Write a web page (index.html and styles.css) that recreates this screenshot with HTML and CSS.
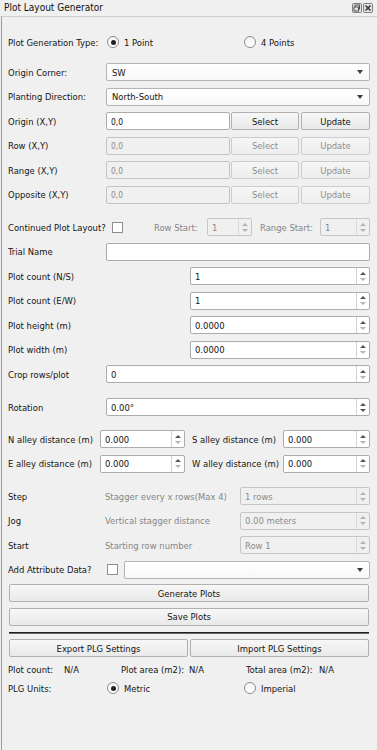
FILE: index.html
```html
<!DOCTYPE html>
<html>
<head>
<meta charset="utf-8">
<link rel="stylesheet" href="styles.css">
</head>
<body>
<div class="titlebar">
  <span class="title">Plot Layout Generator</span>
  <span class="tb-icons">
    <svg class="tb-ic" width="10" height="10" viewBox="0 0 10 10"><rect x="0.5" y="0.5" width="9" height="9" rx="1" fill="#e4e4e4" stroke="#7d7d7d"/><rect x="3" y="2" width="4.5" height="4" fill="none" stroke="#555" stroke-width="1"/><rect x="2" y="4" width="4.5" height="4" fill="#e4e4e4" stroke="#555" stroke-width="1"/></svg>
    <svg class="tb-ic" width="10" height="10" viewBox="0 0 10 10"><rect x="0.5" y="0.5" width="9" height="9" rx="1" fill="#e4e4e4" stroke="#7d7d7d"/><path d="M2.5 2.5 L7.5 7.5 M7.5 2.5 L2.5 7.5" stroke="#333" stroke-width="1.5"/></svg>
  </span>
</div>
<div class="content">
  <div class="row radio-row">
    <span class="lbl w98">Plot Generation Type:</span>
    <span class="radio-item w137"><span class="radio on"></span>1 Point</span>
    <span class="radio-item"><span class="radio"></span>4 Points</span>
  </div>

  <div class="group g-a">
    <div class="row">
      <span class="lbl w98">Origin Corner:</span>
      <span class="combo"><span class="cv">SW</span><i class="ca"></i></span>
    </div>
    <div class="row">
      <span class="lbl w98">Planting Direction:</span>
      <span class="combo"><span class="cv">North-South</span><i class="ca"></i></span>
    </div>
    <div class="row">
      <span class="lbl w98">Origin (X,Y)</span>
      <span class="input xy">0,0</span>
      <span class="btn sel">Select</span>
      <span class="btn upd">Update</span>
    </div>
    <div class="row">
      <span class="lbl w98">Row (X,Y)</span>
      <span class="input xy dis">0,0</span>
      <span class="btn sel dis">Select</span>
      <span class="btn upd dis">Update</span>
    </div>
    <div class="row">
      <span class="lbl w98">Range (X,Y)</span>
      <span class="input xy dis">0,0</span>
      <span class="btn sel dis">Select</span>
      <span class="btn upd dis">Update</span>
    </div>
    <div class="row">
      <span class="lbl w98">Opposite (X,Y)</span>
      <span class="input xy dis">0,0</span>
      <span class="btn sel dis">Select</span>
      <span class="btn upd dis">Update</span>
    </div>
  </div>

  <div class="group g-b">
    <div class="row">
      <span class="lbl w104">Continued Plot Layout?</span>
      <span class="check"></span>
      <span class="lbl gray rs">Row Start:</span>
      <span class="spin dis w45"><span class="sv">1</span><span class="sa"><i class="up"></i><i class="dn"></i></span></span>
      <span class="lbl gray rg">Range Start:</span>
      <span class="spin dis grow"><span class="sv">1</span><span class="sa"><i class="up"></i><i class="dn"></i></span></span>
    </div>
    <div class="row">
      <span class="lbl w98">Trial Name</span>
      <span class="input grow"></span>
    </div>
    <div class="row">
      <span class="lbl w182">Plot count (N/S)</span>
      <span class="spin grow"><span class="sv">1</span><span class="sa"><i class="up"></i><i class="dn"></i></span></span>
    </div>
    <div class="row">
      <span class="lbl w182">Plot count (E/W)</span>
      <span class="spin grow"><span class="sv">1</span><span class="sa"><i class="up"></i><i class="dn"></i></span></span>
    </div>
    <div class="row">
      <span class="lbl w182">Plot height (m)</span>
      <span class="spin grow"><span class="sv">0.0000</span><span class="sa"><i class="up"></i><i class="dn"></i></span></span>
    </div>
    <div class="row">
      <span class="lbl w182">Plot width (m)</span>
      <span class="spin grow"><span class="sv">0.0000</span><span class="sa"><i class="up"></i><i class="dn"></i></span></span>
    </div>
    <div class="row">
      <span class="lbl w98">Crop rows/plot</span>
      <span class="spin grow"><span class="sv">0</span><span class="sa"><i class="up"></i><i class="dn"></i></span></span>
    </div>
  </div>

  <div class="group g-rot">
    <div class="row">
      <span class="lbl w98">Rotation</span>
      <span class="spin grow"><span class="sv">0.00°</span><span class="sa"><i class="up"></i><i class="dn dark"></i></span></span>
    </div>
  </div>

  <div class="group g-alley">
    <div class="row">
      <span class="lbl w92">N alley distance (m)</span>
      <span class="spin w85"><span class="sv">0.000</span><span class="sa"><i class="up"></i><i class="dn"></i></span></span>
      <span class="lbl al2">S alley distance (m)</span>
      <span class="spin grow"><span class="sv">0.000</span><span class="sa"><i class="up"></i><i class="dn"></i></span></span>
    </div>
    <div class="row">
      <span class="lbl w92">E alley distance (m)</span>
      <span class="spin w85"><span class="sv">0.000</span><span class="sa"><i class="up"></i><i class="dn"></i></span></span>
      <span class="lbl al2">W alley distance (m)</span>
      <span class="spin grow"><span class="sv">0.000</span><span class="sa"><i class="up"></i><i class="dn"></i></span></span>
    </div>
  </div>

  <div class="group g-stag">
    <div class="row">
      <span class="lbl w97">Step</span>
      <span class="lbl gray w135">Stagger every x rows(Max 4)</span>
      <span class="spin dis grow"><span class="sv">1 rows</span><span class="sa"><i class="up"></i><i class="dn"></i></span></span>
    </div>
    <div class="row">
      <span class="lbl w97">Jog</span>
      <span class="lbl gray w135">Vertical stagger distance</span>
      <span class="spin dis grow"><span class="sv">0.00 meters</span><span class="sa"><i class="up"></i><i class="dn"></i></span></span>
    </div>
    <div class="row">
      <span class="lbl w97">Start</span>
      <span class="lbl gray w135">Starting row number</span>
      <span class="spin dis grow"><span class="sv">Row 1</span><span class="sa"><i class="up"></i><i class="dn"></i></span></span>
    </div>
    <div class="row">
      <span class="lbl w99">Add Attribute Data?</span>
      <span class="check small"></span>
      <span class="combo"><span class="cv"></span><i class="ca"></i></span>
    </div>
  </div>

  <div class="group g-btn">
    <div class="row"><span class="btn wide">Generate Plots</span></div>
    <div class="row"><span class="btn wide">Save Plots</span></div>
  </div>

  <div class="sep"></div>

  <div class="row ex-row">
    <span class="btn half">Export PLG Settings</span>
    <span class="btn half">Import PLG Settings</span>
  </div>

  <div class="info">
    <div class="irow">
      <span class="w56">Plot count:</span>
      <span class="w57">N/A</span>
      <span class="w68">Plot area (m2):</span>
      <span class="w57">N/A</span>
      <span class="w73">Total area (m2):</span>
      <span>N/A</span>
    </div>
    <div class="irow">
      <span class="w98">PLG Units:</span>
      <span class="radio-item w137"><span class="radio on"></span>Metric</span>
      <span class="radio-item"><span class="radio"></span>Imperial</span>
    </div>
  </div>
</div>
</body>
</html>
```

FILE: styles.css
```css
* { box-sizing: border-box; margin: 0; padding: 0; }

body {
  background: #f0f0f0;
  font-family: "DejaVu Sans Condensed", "Liberation Sans", Arial, sans-serif;
  font-size: 9.4px;
  color: #141414;
  width: 377px;
  height: 750px;
  overflow: hidden;
}

.titlebar {
  height: 17px;
  display: flex;
  align-items: center;
  padding: 0 4px 1px 4px;
  border-bottom: 1px solid #cdcdcd;
}
.title { font-size: 10px; flex: 1; color: #111; }
.tb-icons { display: flex; gap: 1px; }
.tb-ic { display: block; }

.content {
  margin-left: 1px;
  border-left: 1px solid #9c9c9c;
  height: 733px;
  padding: 16px 7px 0 6px;
}

.row { display: flex; align-items: center; height: 18px; }
.group { display: flex; flex-direction: column; gap: 6.5px; }
.g-a { margin-top: 12px; }
.g-b { margin-top: 14.5px; }
.g-rot { margin-top: 15px; }
.g-alley { margin-top: 14px; }
.g-stag { margin-top: 14.5px; }
.g-btn { margin-top: 5.5px; gap: 5.5px; }

.lbl { white-space: nowrap; flex: none; }
.gray { color: #868686; }
.w92 { width: 92px; }
.w97 { width: 97px; }
.w98 { width: 98px; }
.w99 { width: 99px; }
.w104 { width: 104px; }
.w135 { width: 135px; }
.w137 { width: 137px; }
.w182 { width: 182px; }
.w45 { width: 45px; flex: none; }
.w85 { width: 85px; flex: none; }
.grow { flex: 1; }
.rs { margin-left: 31px; width: 53px; }
.rg { margin-left: 8px; width: 60px; }
.al2 { margin-left: 7px; width: 91px; }

/* radio */
.radio-item { display: flex; align-items: center; flex: none; }
.radio {
  width: 12px; height: 12px; border-radius: 50%;
  border: 1px solid #8c8c8c;
  background: linear-gradient(#f4f4f4, #ffffff);
  margin: 0 5px 0 1px;
  display: flex; align-items: center; justify-content: center;
}
.radio.on::after {
  content: ""; width: 5px; height: 5px; border-radius: 50%; background: #222;
}

/* checkbox */
.check {
  width: 11px; height: 11px; flex: none;
  border: 1px solid #8e8e8e; background: #fff;
}
.check.small { width: 11px; height: 11px; margin-right: 6px; }

/* combo */
.combo {
  flex: 1; height: 18px;
  display: flex; align-items: center;
  border: 1px solid #b4b4b4; border-radius: 2px;
  background: linear-gradient(#ffffff, #f8f8f8);
  padding-left: 5px;
}
.cv { flex: 1; }
.ca {
  width: 0; height: 0;
  border-left: 3.5px solid transparent;
  border-right: 3.5px solid transparent;
  border-top: 4px solid #3c3c3c;
  margin-right: 6px;
}

/* inputs */
.input {
  height: 18px; display: flex; align-items: center;
  border: 1px solid #acacac; border-radius: 2px;
  background: #fff; padding-left: 4px;
}
.input.xy { width: 124px; flex: none; font-size: 8.4px; padding-top: 1px; }
.input.dis { background: #f0f0f0; border-color: #c4c4c4; color: #8a8a8a; }

/* buttons */
.btn {
  height: 18px; display: flex; align-items: center; justify-content: center;
  border: 1px solid #b1b1b1; border-radius: 2px;
  background: linear-gradient(#f7f7f7, #e9e9e9);
  white-space: nowrap;
}
.btn.sel { width: 68px; margin-left: 1px; flex: none; }
.btn.upd { flex: 1; margin-left: 2px; }
.btn.dis { color: #8e8e8e; border-color: #cdcdcd; background: linear-gradient(#f6f6f6, #eeeeee); }
.btn.wide { flex: 1; margin: 0 1px; }
.btn.half { flex: 1; }

/* spin */
.spin {
  height: 18px; display: flex; align-items: stretch;
  border: 1px solid #acacac; border-radius: 2px; background: #fff;
}
.sv { flex: 1; display: flex; align-items: center; padding-left: 4px; white-space: nowrap; }
.sa {
  width: 13px; flex: none;
  border-left: 1px solid #d2d2d2;
  display: flex; flex-direction: column; align-items: center; justify-content: center; gap: 3px;
}
.up {
  width: 0; height: 0;
  border-left: 3px solid transparent; border-right: 3px solid transparent;
  border-bottom: 3.5px solid #555;
}
.dn {
  width: 0; height: 0;
  border-left: 3px solid transparent; border-right: 3px solid transparent;
  border-top: 3.5px solid #b4b4b4;
}
.dn.dark { border-top-color: #555; }
.spin.dis { background: #f0f0f0; border-color: #c6c6c6; color: #8a8a8a; }
.spin.dis .up { border-bottom-color: #b4b4b4; }
.spin.dis .sa { border-left-color: #d8d8d8; }

.sep {
  margin: 6px 1px 0 1px;
  height: 2px;
  border-top: 1px solid #1e1e1e;
  border-bottom: 1px solid #6a6a6a;
}
.ex-row { margin: 5.5px 1px 0 1px; gap: 2px; }

.info { margin-top: 4px; display: flex; flex-direction: column; gap: 3px; }
.irow { display: flex; align-items: center; height: 16px; white-space: nowrap; }
.irow > span { flex: none; }
.w56 { width: 56px; }
.w57 { width: 57px; }
.w68 { width: 68px; }
.w73 { width: 73px; }
```
